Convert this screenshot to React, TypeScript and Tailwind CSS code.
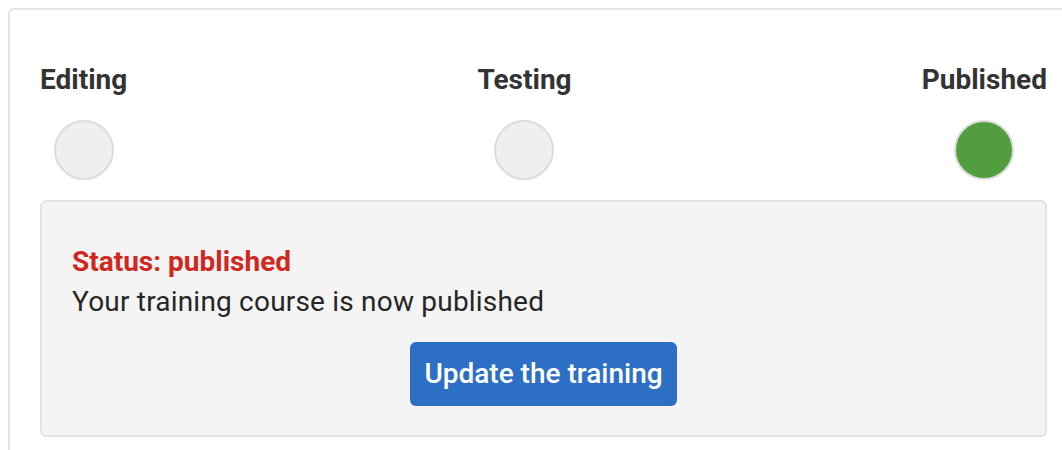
const steps = [
  { label: 'Editing', done: false },
  { label: 'Testing', done: false },
  { label: 'Published', done: true },
];

export default function App() {
  return (
    <div className="w-screen h-screen overflow-hidden bg-white font-['Roboto',sans-serif]">
      <div className="ml-[8px] mt-[8px] w-[1071px] rounded-[6px] border-2 border-[#e4e4e4] bg-white px-[30px] pt-[54px] pb-[30px]">
        <div className="flex justify-between">
          {steps.map((step) => (
            <div key={step.label} className="flex flex-col items-center">
              <h4 className="text-[28px] leading-[32px] font-bold text-[#333333]">{step.label}</h4>
              <div
                className={
                  step.done
                    ? 'mt-[24px] h-[60px] w-[60px] rounded-full border-2 border-[#dddddd] bg-[#529e3f]'
                    : 'mt-[24px] h-[60px] w-[60px] rounded-full border-2 border-[#dddddd] bg-[#efefef]'
                }
              />
            </div>
          ))}
        </div>

        <div className="mt-[20px] rounded-[6px] border-2 border-[#e3e3e3] bg-[#f4f4f4] pl-[30px] pr-[30px] pt-[40px] pb-[29px]">
          <p className="text-[28px] leading-[40px] font-bold text-[#d0281e]">Status: published</p>
          <p className="text-[28px] leading-[40px] tracking-[0.2px] text-[#262626]">Your training course is now published</p>
          <div className="mt-[20px] flex justify-center">
            <button className="h-[64px] rounded-[6px] bg-[#2e6fc6] px-[14px] text-[28px] font-medium text-white">
              Update the training
            </button>
          </div>
        </div>
      </div>
    </div>
  );
}
